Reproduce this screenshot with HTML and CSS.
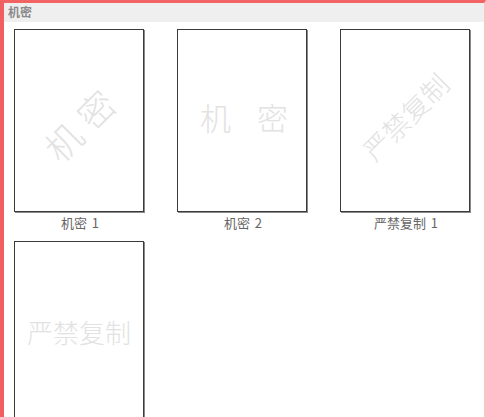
FILE: index.html
```html
<!DOCTYPE html>
<html lang="zh">
<head>
<meta charset="utf-8">
<link rel="stylesheet" href="styles.css">
</head>
<body>
<div class="panel">
  <div class="header">机密</div>
  <div class="grid">
    <div class="item">
      <div class="page"><span class="wm wm-diag wm-big">机密</span></div>
      <div class="label">机密 1</div>
    </div>
    <div class="item">
      <div class="page"><span class="wm wm-spaced"><span>机</span><span>密</span></span></div>
      <div class="label">机密 2</div>
    </div>
    <div class="item">
      <div class="page"><span class="wm wm-diag wm-mid">严禁复制</span></div>
      <div class="label">严禁复制 1</div>
    </div>
    <div class="item">
      <div class="page"><span class="wm wm-four">严禁复制</span></div>
    </div>
  </div>
</div>
</body>
</html>
```
FILE: styles.css
```css
html, body {
  margin: 0;
  padding: 0;
  background: #fff;
  overflow: hidden;
}
.panel {
  box-sizing: border-box;
  height: 417px;
  overflow: hidden;
  border-top: 3px solid #f26363;
  border-left: 4px solid #f06060;
  border-right: 2px solid #f8c4c4;
  font-family: "Noto Sans CJK SC", "Noto Sans", sans-serif;
}
.header {
  height: 19px;
  line-height: 18px;
  background: #efefef;
  color: #8a8a8a;
  font-weight: bold;
  font-size: 12px;
  padding-left: 4px;
}
.grid {
  display: grid;
  grid-template-columns: 130px 130px 130px;
  column-gap: 33px;
  padding: 7px 0 0 10px;
}
.item {
  display: flex;
  flex-direction: column;
  align-items: center;
}
.page {
  box-sizing: border-box;
  width: 130px;
  height: 183px;
  border: 1px solid #3a3a3a;
  box-shadow: 1px 1px 0 #8a8a8a;
  background: #fff;
  display: flex;
  align-items: center;
  justify-content: center;
  overflow: hidden;
}
.wm {
  color: #e2e2e2;
  white-space: nowrap;
  font-weight: 300;
}
.wm-diag {
  transform: rotate(-45deg);
}
.wm-big {
  font-size: 36px;
  letter-spacing: 10px;
  margin-left: 6px;
}
.wm-mid {
  font-size: 27px;
  margin-top: -8px;
}
.wm-spaced {
  display: flex;
  gap: 26px;
  font-size: 31px;
  margin-top: -8px;
  margin-left: 4px;
}
.wm-four {
  font-size: 26px;
  margin-top: -2px;
}
.label {
  height: 29px;
  line-height: 22px;
  font-size: 13px;
  color: #666;
  margin-left: 2px;
  word-spacing: 2px;
}
```
